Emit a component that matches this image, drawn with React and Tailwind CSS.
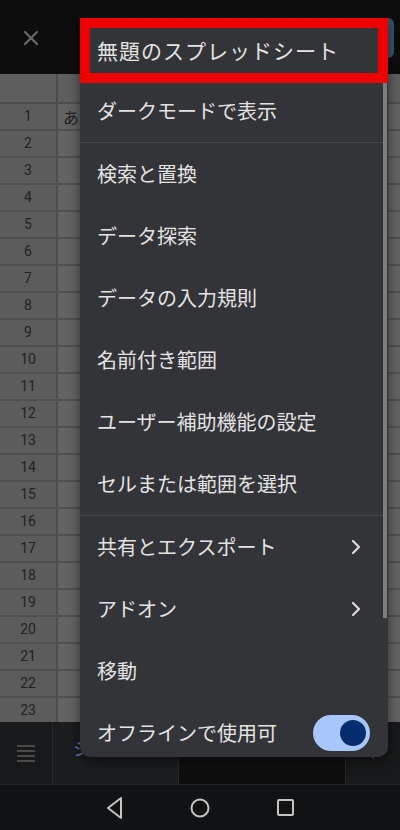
import React from 'react';

const rows = Array.from({ length: 23 }, (_, i) => i + 1);

const items = [
  { label: '検索と置換' },
  { label: 'データ探索' },
  { label: 'データの入力規則' },
  { label: '名前付き範囲' },
  { label: 'ユーザー補助機能の設定' },
  { label: 'セルまたは範囲を選択' },
];

const moreItems = [
  { label: '共有とエクスポート', chevron: true },
  { label: 'アドオン', chevron: true },
  { label: '移動' },
];

function Chevron() {
  return (
    <svg width="12" height="16" viewBox="0 0 12 16" className="mr-[26px]">
      <path d="M3 2 L9 8 L3 14" fill="none" stroke="#dcdcdc" strokeWidth="2.2" strokeLinecap="round" strokeLinejoin="round" />
    </svg>
  );
}

function MenuItem({ label, chevron, children, className = '' }) {
  return (
    <div className={`h-[62px] shrink-0 flex items-center justify-between pl-[17px] ${className}`}>
      <span className="text-[20px] text-[#e3e3e3] leading-none">{label}</span>
      {chevron && <Chevron />}
      {children}
    </div>
  );
}

export default function App() {
  return (
    <div className="relative w-[400px] h-[830px] overflow-hidden bg-[#0d0d0d] font-['Noto_Sans_CJK_JP','Roboto',sans-serif]">
      {/* top bar */}
      <div className="h-[74px] flex items-start justify-between bg-[#0d0d0d]">
        <svg width="16" height="16" viewBox="0 0 16 16" className="ml-[23px] mt-[30px]">
          <path d="M2 2 L14 14 M14 2 L2 14" stroke="#6b6b6b" strokeWidth="2.2" strokeLinecap="round" />
        </svg>
        <div className="mt-[18px] mr-[6px] w-[60px] h-[40px] rounded-md bg-[#35536b]" />
      </div>

      {/* sheet grid */}
      <div className="h-[648px] overflow-hidden bg-[#636363]">
        <div className="h-[30px] flex border-b-2 border-[#4d4d4d]">
          <div className="w-[58px] bg-[#5e5e5e] border-r-2 border-[#4d4d4d]" />
          <div className="flex-1 bg-[#5e5e5e]" />
        </div>
        {rows.map((n) => (
          <div key={n} className="h-[27px] flex border-b-2 border-[#4f4f4f]">
            <div className="w-[58px] bg-[#5c5c5c] border-r-2 border-[#4d4d4d] flex items-center justify-center font-['Roboto',sans-serif] text-[14px] text-[#222]">
              {n}
            </div>
            <div className="flex-1 flex items-center pl-[5px] text-[16px] text-[#1e1e1e]">
              {n === 1 ? 'あ' : ''}
            </div>
          </div>
        ))}
      </div>

      {/* bottom sheet bar */}
      <div className="h-[63px] flex bg-[#18191a] border-b border-[#222]">
        <div className="w-[53px] flex flex-col items-center justify-center gap-[3px] border-r border-[#2a2a2a]">
          <div className="w-[18px] h-[2px] bg-[#4a4a4a]" />
          <div className="w-[18px] h-[2px] bg-[#4a4a4a]" />
          <div className="w-[18px] h-[2px] bg-[#4a4a4a]" />
          <div className="w-[18px] h-[2px] bg-[#4a4a4a]" />
        </div>
        <div className="w-[126px] flex items-center pl-[20px] pb-[10px] text-[18px] text-[#5b7fb5] border-r border-[#2a2a2a] bg-[#1b1c1e]">
          シート1
        </div>
        <div className="w-[167px] bg-gradient-to-b from-[#151617] to-[#0c0c0c] border-r border-[#2a2a2a]" />
        <div className="flex-1 flex items-center justify-center text-[#555] text-[18px]">+</div>
      </div>

      {/* nav bar */}
      <div className="h-[45px] flex items-center justify-center gap-[67px] bg-[#111213]">
        <svg width="17" height="24" viewBox="0 0 17 24">
          <path d="M15 2 L2 12 L15 22 Z" fill="none" stroke="#c4c4c4" strokeWidth="2" strokeLinejoin="round" />
        </svg>
        <svg width="20" height="20" viewBox="0 0 20 20">
          <circle cx="10" cy="10" r="8.5" fill="none" stroke="#c4c4c4" strokeWidth="2" />
        </svg>
        <svg width="17" height="17" viewBox="0 0 17 17">
          <rect x="1" y="1" width="15" height="15" rx="1" fill="none" stroke="#c4c4c4" strokeWidth="2" />
        </svg>
      </div>

      {/* overflow menu */}
      <div className="absolute left-[80px] top-[18px] w-[308px] h-[739px] bg-[#333438] rounded-b-[10px] overflow-hidden shadow-[0_4px_12px_rgba(0,0,0,0.5)] flex flex-col">
        <div className="h-[62px] shrink-0 flex items-center pl-[17px] pt-[2px]">
          <span className="text-[21px] tracking-[1px] text-[#e3e3e3] leading-none">無題のスプレッドシート</span>
        </div>
        <MenuItem label="ダークモードで表示" />
        <div className="h-px shrink-0 bg-[#48494c]" />
        {items.map((it) => (
          <MenuItem key={it.label} label={it.label} />
        ))}
        <div className="h-px shrink-0 bg-[#48494c]" />
        {moreItems.map((it) => (
          <MenuItem key={it.label} label={it.label} chevron={it.chevron} />
        ))}
        <MenuItem label="オフラインで使用可">
          <div className="mr-[18px] w-[57px] h-[36px] rounded-full bg-[#a8c7fa] flex items-center justify-end pr-[4px]">
            <div className="w-[26px] h-[26px] rounded-full bg-[#062e6f]" />
          </div>
        </MenuItem>

        {/* scrollbar */}
        <div className="absolute right-[1px] top-[65px] w-[4px] h-[535px] bg-[#7c7d80]" />
        {/* highlight box */}
        <div className="absolute left-0 top-0 w-[308px] h-[65px] border-[10px] border-[#ee0000]" />
      </div>
    </div>
  );
}
